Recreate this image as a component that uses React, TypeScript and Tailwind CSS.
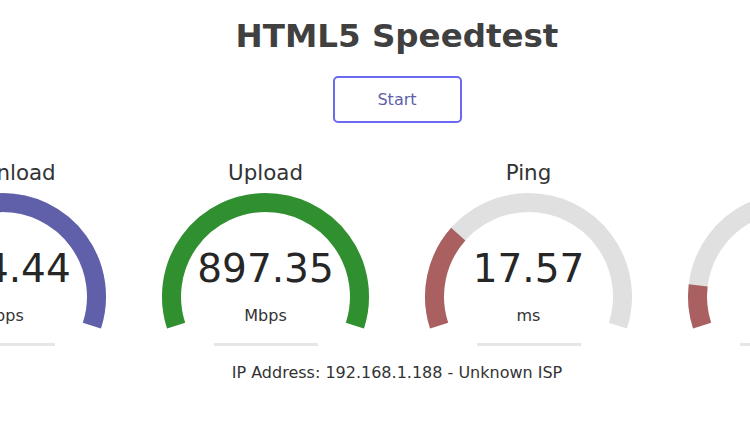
import React from 'react';

type Gauge = {
  label: string;
  value: string;
  unit: string;
  fill: number;
  color: string;
};

const gauges: Gauge[] = [
  { label: 'Download', value: '934.44', unit: 'Mbps', fill: 1, color: '#6060AA' },
  { label: 'Upload', value: '897.35', unit: 'Mbps', fill: 1, color: '#309030' },
  { label: 'Ping', value: '17.57', unit: 'ms', fill: 0.276, color: '#AA6060' },
  { label: 'Jitter', value: '1.17', unit: 'ms', fill: 0.115, color: '#AA6060' },
];

const CX = 131.5;
const CY = 110.6;
const R = 94;
const START = -198;
const SWEEP = 216;

function arcPath(frac: number) {
  const a0 = (START * Math.PI) / 180;
  const a1 = ((START + SWEEP * frac) * Math.PI) / 180;
  const x0 = CX + R * Math.cos(a0);
  const y0 = CY + R * Math.sin(a0);
  const x1 = CX + R * Math.cos(a1);
  const y1 = CY + R * Math.sin(a1);
  const large = SWEEP * frac > 180 ? 1 : 0;
  return `M ${x0} ${y0} A ${R} ${R} 0 ${large} 1 ${x1} ${y1}`;
}

function Meter({ g }: { g: Gauge }) {
  return (
    <div className="w-[263px] shrink-0 flex flex-col items-center">
      <div className="text-[21.4px] leading-[26px] text-[#333333]">{g.label}</div>
      <div className="relative w-[263px] h-[150px]">
        <svg className="absolute inset-0" width="263" height="150" viewBox="0 0 263 150">
          <path d={arcPath(1)} fill="none" stroke="#E0E0E0" strokeWidth="19" />
          <path d={arcPath(g.fill)} fill="none" stroke={g.color} strokeWidth="19" />
        </svg>
        <div className="relative flex flex-col items-center pt-[63px]">
          <div className="text-[39px] leading-[40px] text-[#262626]">{g.value}</div>
          <div className="mt-[17px] text-[16px] leading-[20px] text-[#333333]">{g.unit}</div>
        </div>
      </div>
      <div className="mt-[7px] w-[104px] h-[3px] bg-[#E6E6E6]" />
    </div>
  );
}

export default function App() {
  return (
    <div className="w-[750px] h-[422px] overflow-hidden bg-white font-['DejaVu_Sans',sans-serif]">
      <div className="w-[794px] flex flex-col items-center">
        <h1 className="pt-[17px] text-[32.5px] leading-[38px] font-bold text-[#404040]">HTML5 Speedtest</h1>
        <button
          type="button"
          className="mt-[21px] w-[129px] h-[47px] border-2 border-[#6A6AF0] rounded-[5px] text-[16px] text-[#6060AA] bg-white"
        >
          Start
        </button>
        <div className="mt-[37px] w-[794px] flex justify-center">
          {gauges.map((g) => (
            <Meter key={g.label} g={g} />
          ))}
        </div>
        <div className="mt-[17px] text-[16px] leading-[20px] text-[#333333]">
          IP Address: 192.168.1.188 - Unknown ISP
        </div>
      </div>
    </div>
  );
}
